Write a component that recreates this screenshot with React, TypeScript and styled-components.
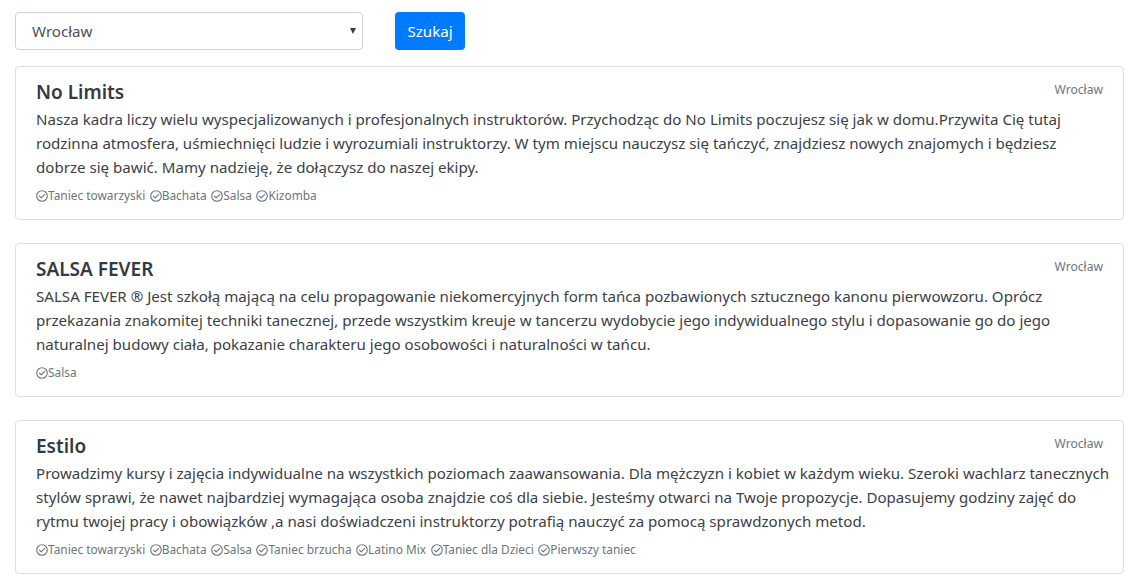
import React from 'react';
import styled, { createGlobalStyle } from 'styled-components';

const GlobalStyle = createGlobalStyle`
  * { box-sizing: border-box; }
  body {
    margin: 0;
    background: #fff;
    font-family: "Noto Sans", "Open Sans", sans-serif;
    color: #343a40;
  }
`;

interface School {
  name: string;
  city: string;
  lines: string[];
  tags: string[];
}

const schools: School[] = [
  {
    name: 'No Limits',
    city: 'Wrocław',
    lines: [
      'Nasza kadra liczy wielu wyspecjalizowanych i profesjonalnych instruktorów. Przychodząc do No Limits poczujesz się jak w domu.Przywita Cię tutaj',
      'rodzinna atmosfera, uśmiechnięci ludzie i wyrozumiali instruktorzy. W tym miejscu nauczysz się tańczyć, znajdziesz nowych znajomych i będziesz',
      'dobrze się bawić. Mamy nadzieję, że dołączysz do naszej ekipy.',
    ],
    tags: ['Taniec towarzyski', 'Bachata', 'Salsa', 'Kizomba'],
  },
  {
    name: 'SALSA FEVER',
    city: 'Wrocław',
    lines: [
      'SALSA FEVER ® Jest szkołą mającą na celu propagowanie niekomercyjnych form tańca pozbawionych sztucznego kanonu pierwowzoru. Oprócz',
      'przekazania znakomitej techniki tanecznej, przede wszystkim kreuje w tancerzu wydobycie jego indywidualnego stylu i dopasowanie go do jego',
      'naturalnej budowy ciała, pokazanie charakteru jego osobowości i naturalności w tańcu.',
    ],
    tags: ['Salsa'],
  },
  {
    name: 'Estilo',
    city: 'Wrocław',
    lines: [
      'Prowadzimy kursy i zajęcia indywidualne na wszystkich poziomach zaawansowania. Dla mężczyzn i kobiet w każdym wieku. Szeroki wachlarz tanecznych',
      'stylów sprawi, że nawet najbardziej wymagająca osoba znajdzie coś dla siebie. Jesteśmy otwarci na Twoje propozycje. Dopasujemy godziny zajęć do',
      'rytmu twojej pracy i obowiązków ,a nasi doświadczeni instruktorzy potrafią nauczyć za pomocą sprawdzonych metod.',
    ],
    tags: ['Taniec towarzyski', 'Bachata', 'Salsa', 'Taniec brzucha', 'Latino Mix', 'Taniec dla Dzieci', 'Pierwszy taniec'],
  },
];

const CheckCircle = () => (
  <svg width="12" height="12" viewBox="0 0 12 12" fill="none" stroke="currentColor" strokeWidth="1.1">
    <circle cx="6" cy="6" r="5.3" />
    <path d="M3.4 6.1 L5.2 7.9 L8.7 4.3" strokeLinecap="round" strokeLinejoin="round" />
  </svg>
);

export default function App() {
  return (
    <Page>
      <GlobalStyle />
      <SearchBar>
        <SelectWrap>
          <Select defaultValue="Wrocław">
            <option>Wrocław</option>
            <option>Warszawa</option>
            <option>Kraków</option>
          </Select>
          <Caret />
        </SelectWrap>
        <SearchButton>Szukaj</SearchButton>
      </SearchBar>

      <List>
        {schools.map(s => (
          <Card key={s.name}>
            <CardHeader>
              <Title>{s.name}</Title>
              <City>{s.city}</City>
            </CardHeader>
            <Description>
              {s.lines.map((l, i) => <Line key={i}>{l}</Line>)}
            </Description>
            <Tags>
              {s.tags.map(t => (
                <Tag key={t}><CheckCircle />{t}</Tag>
              ))}
            </Tags>
          </Card>
        ))}
      </List>
    </Page>
  );
}

const Page = styled.div`
  width: 1109px;
  margin-left: 15px;
  padding-top: 12px;
`;

const SearchBar = styled.div`
  display: flex;
  align-items: center;
  gap: 32px;
  margin-bottom: 16px;
`;

const SelectWrap = styled.div`
  position: relative;
  width: 348px;
  height: 38px;
`;

const Select = styled.select`
  appearance: none;
  width: 100%;
  height: 100%;
  border: 1px solid #ced4da;
  border-radius: 4px;
  background: #fff;
  padding: 0 30px 0 16px;
  font-family: "Noto Sans", "Open Sans", sans-serif;
  font-size: 15.1px;
  color: #495057;
  outline: none;
`;

const Caret = styled.span`
  position: absolute;
  right: 7px;
  top: 16px;
  width: 0;
  height: 0;
  border-left: 3.5px solid transparent;
  border-right: 3.5px solid transparent;
  border-top: 6px solid #3a3f44;
  pointer-events: none;
`;

const SearchButton = styled.button`
  height: 38px;
  width: 70px;
  border: none;
  border-radius: 4px;
  background: #007bff;
  color: #fff;
  font-family: "Noto Sans", "Open Sans", sans-serif;
  font-size: 15.1px;
  padding: 0;
  cursor: pointer;
`;

const List = styled.div`
  display: flex;
  flex-direction: column;
  gap: 23px;
`;

const Card = styled.div`
  border: 1px solid #dfdfdf;
  border-radius: 4px;
  padding: 13px 20px 14px;
  background: #fff;
`;

const CardHeader = styled.div`
  display: flex;
  justify-content: space-between;
  align-items: flex-start;
`;

const Title = styled.h5`
  margin: 0;
  font-size: 19px;
  line-height: 24px;
  font-weight: 600;
  color: #343a40;
`;

const City = styled.span`
  font-size: 12.1px;
  line-height: 19px;
  color: #6c757d;
`;

const Description = styled.p`
  margin: 3px 0 7px;
  font-size: 15.1px;
  line-height: 24px;
  color: #3b4147;
`;

const Line = styled.span`
  display: block;
  white-space: nowrap;
`;

const Tags = styled.div`
  display: flex;
  flex-wrap: wrap;
  column-gap: 4.5px;
  font-size: 11.9px;
  line-height: 19px;
  color: #6c757d;
`;

const Tag = styled.span`
  display: inline-flex;
  align-items: center;
  gap: 0;
  svg { flex-shrink: 0; margin-top: 1px; }
`;
